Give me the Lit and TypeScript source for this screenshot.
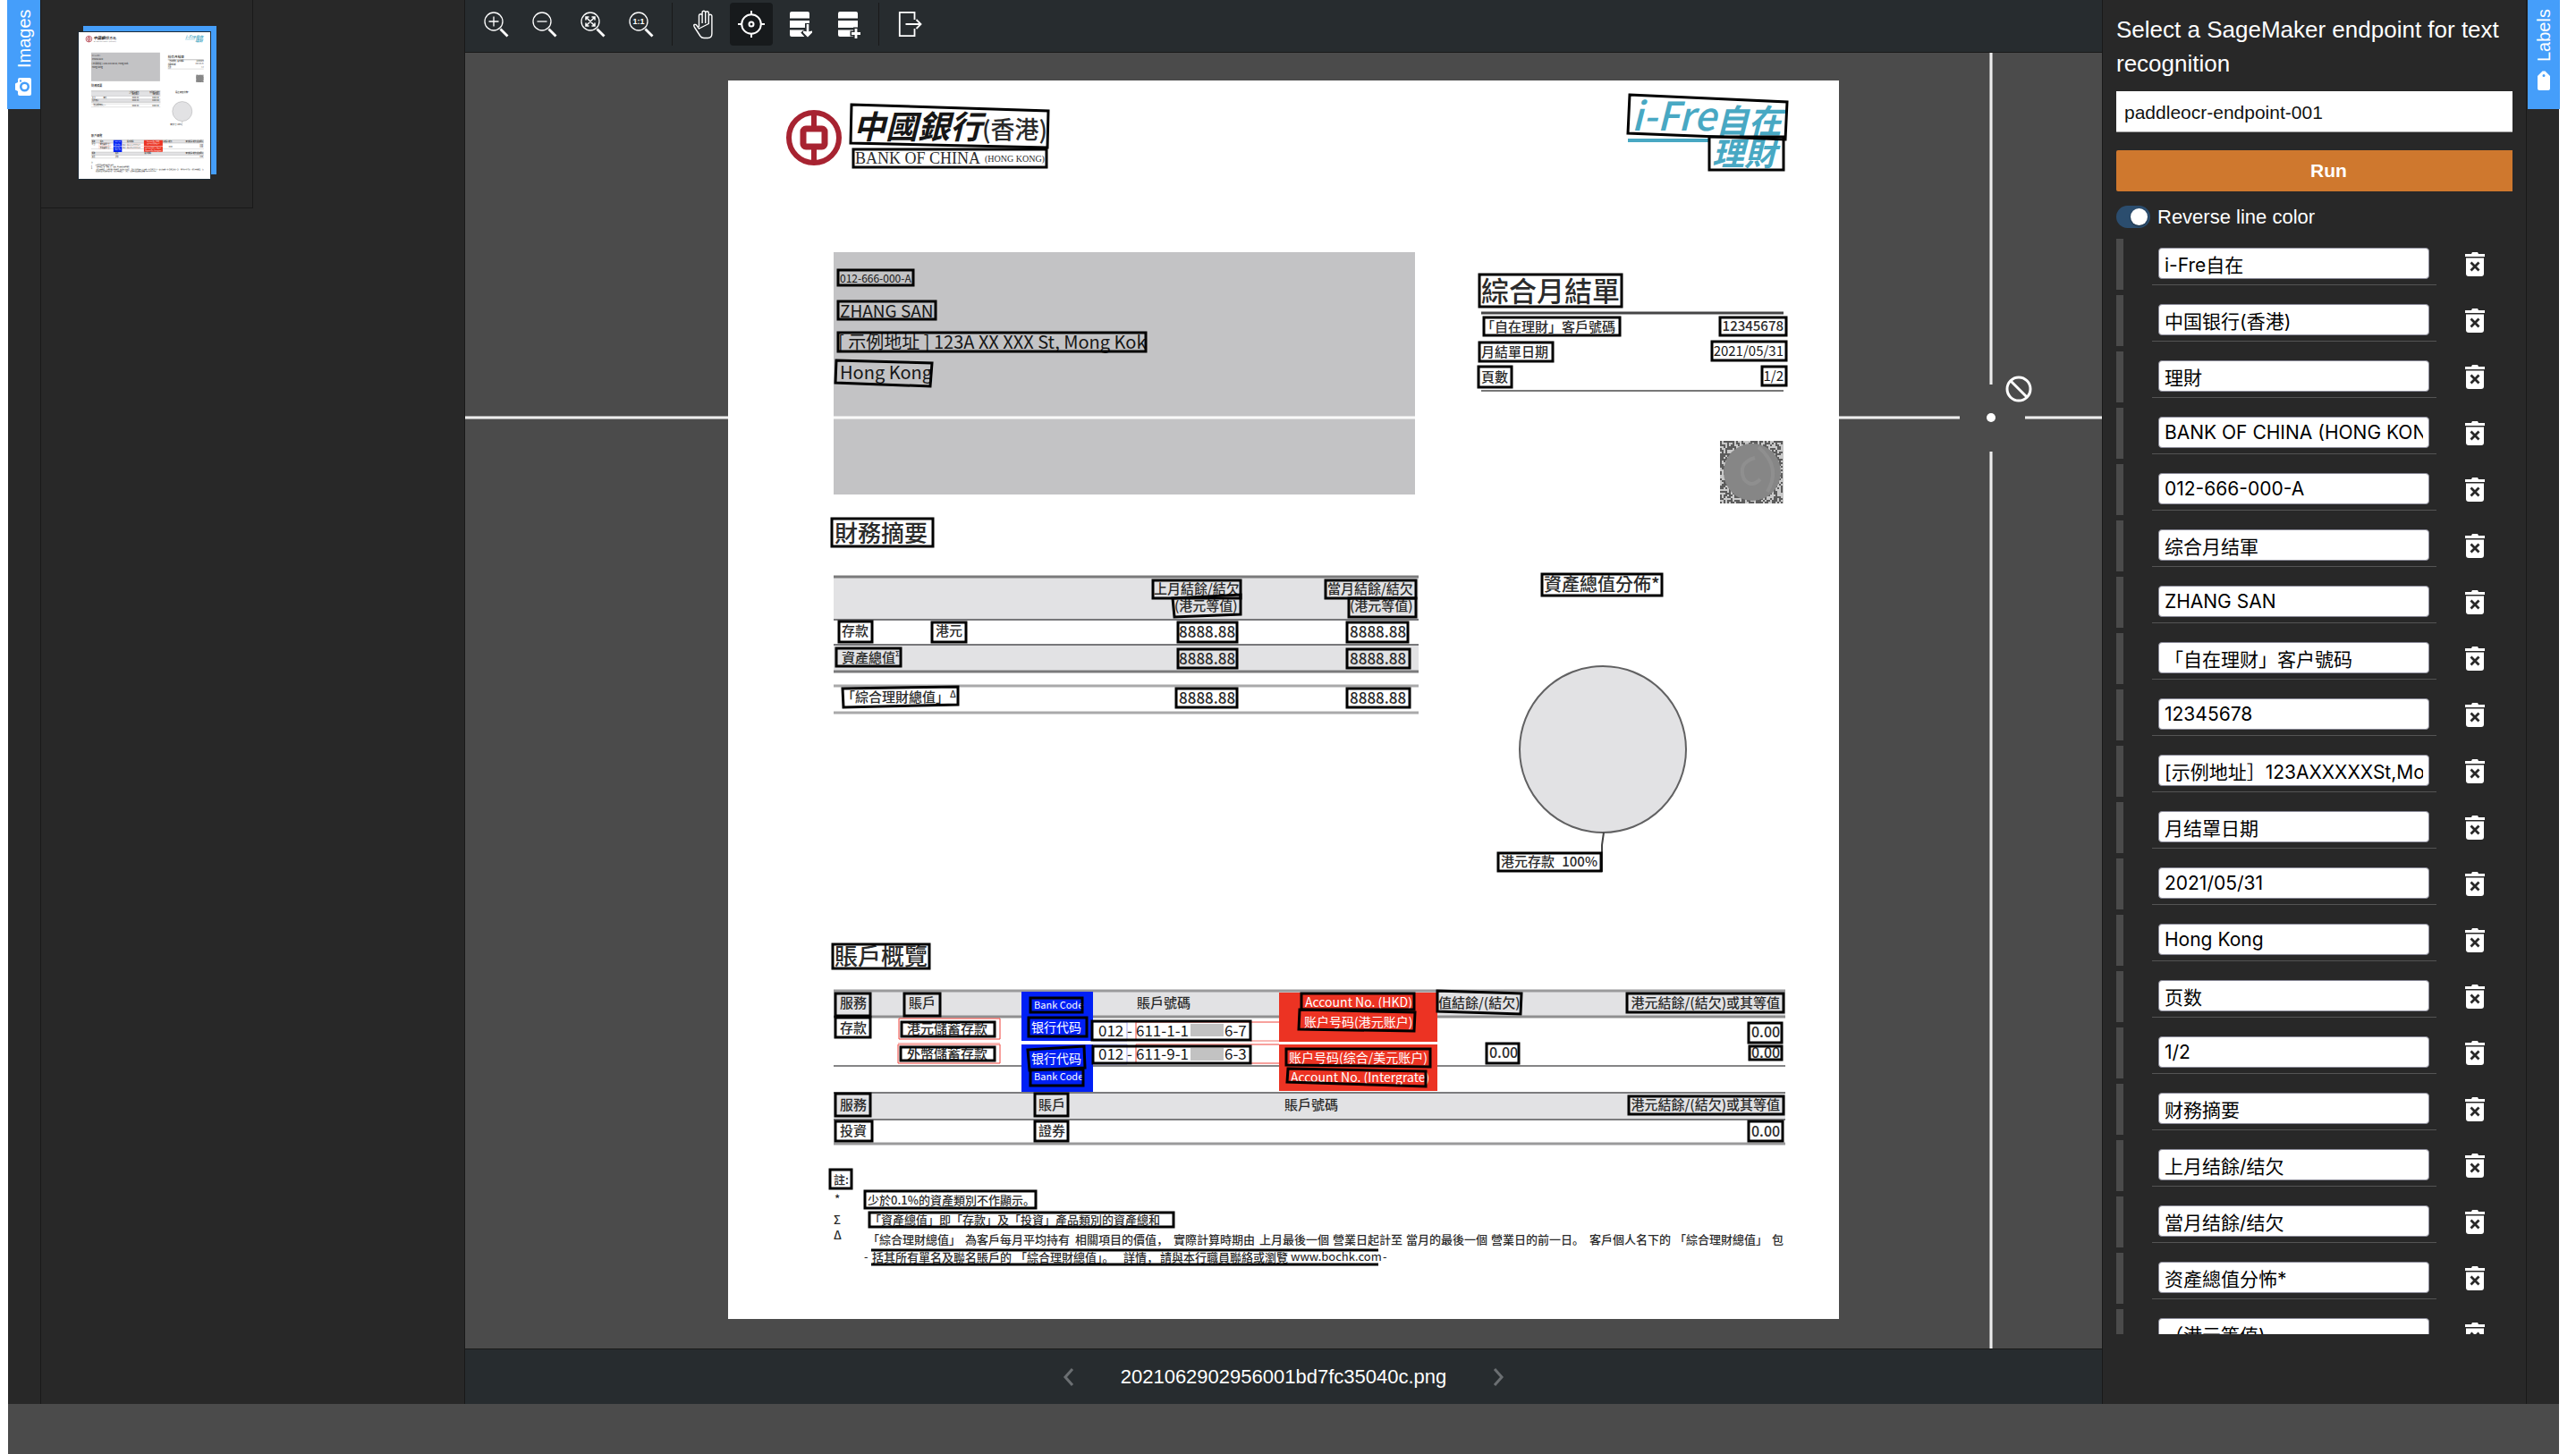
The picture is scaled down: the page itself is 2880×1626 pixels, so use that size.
import { LitElement, html, svg, css } from "lit";
import { customElement, property, state } from "lit/decorators.js";

type Pt = [number, number];
type Rule = { y: number; w: number; c: string };
type Note = { x: number; y: number; s: number; t: string; k?: string };

/* Sheet geometry: one unit is one canvas pixel at the default zoom. */
const SHEET = { x: 814, y: 90, w: 1242, h: 1385 };

const box = (x1: number, y1: number, x2: number, y2: number): Pt[] => [
  [x1, y1],
  [x2, y1],
  [x2, y2],
  [x1, y2],
];

const REGIONS: Pt[][] = [
  [[952, 117], [1172, 124], [1171, 165], [951, 160]],
  box(954, 167, 1170, 187),
  box(937, 302, 1021, 319),
  box(937, 337, 1046, 357),
  box(937, 372, 1281, 393),
  [[935, 403], [1042, 406], [1040, 432], [934, 428]],
  [[1822, 106], [1998, 114], [1996, 156], [1820, 149]],
  box(1911, 153, 1994, 190),
  box(1654, 307, 1813, 343),
  box(1659, 355, 1811, 375),
  box(1923, 355, 1997, 375),
  box(1654, 383, 1736, 404),
  box(1914, 382, 1997, 403),
  box(1653, 410, 1690, 433),
  box(1970, 410, 1997, 431),
  box(930, 580, 1043, 611),
  box(1289, 649, 1387, 669),
  [[1311, 669], [1387, 665], [1387, 687], [1313, 690]],
  box(1482, 649, 1583, 669),
  box(1508, 669, 1583, 690),
  box(938, 695, 975, 718),
  box(1042, 696, 1080, 718),
  box(1317, 696, 1383, 718),
  box(1506, 696, 1574, 718),
  box(935, 725, 1007, 745),
  box(1317, 726, 1383, 747),
  box(1506, 726, 1576, 747),
  [[942, 770], [1071, 768], [1071, 788], [943, 791]],
  box(1315, 770, 1383, 791),
  box(1506, 770, 1576, 791),
  box(1724, 642, 1858, 666),
  box(1675, 954, 1790, 974),
  box(931, 1056, 1039, 1083),
  box(934, 1111, 973, 1136),
  box(1011, 1111, 1051, 1136),
  box(934, 1138, 973, 1160),
  box(1008, 1143, 1112, 1159),
  box(1007, 1171, 1112, 1186),
  box(1152, 1116, 1210, 1132),
  box(1150, 1138, 1215, 1159),
  [[1149, 1174], [1212, 1170], [1213, 1194], [1151, 1197]],
  box(1152, 1196, 1211, 1214),
  box(1221, 1142, 1398, 1163),
  box(1222, 1170, 1398, 1189),
  box(1455, 1111, 1581, 1129),
  [[1453, 1129], [1582, 1132], [1581, 1153], [1452, 1151]],
  [[1438, 1173], [1599, 1173], [1599, 1193], [1438, 1191]],
  [[1440, 1195], [1594, 1198], [1594, 1215], [1439, 1210]],
  [[1607, 1108], [1701, 1111], [1700, 1134], [1607, 1131]],
  box(1819, 1111, 1994, 1132),
  box(1955, 1144, 1992, 1166),
  box(1956, 1170, 1992, 1185),
  box(1662, 1167, 1698, 1189),
  box(1821, 1226, 1994, 1246),
  box(1955, 1254, 1993, 1276),
  box(934, 1223, 973, 1248),
  box(1157, 1223, 1194, 1248),
  box(934, 1254, 975, 1276),
  box(1157, 1254, 1194, 1276),
  box(928, 1308, 952, 1329),
  box(967, 1332, 1158, 1351),
  box(972, 1356, 1312, 1372),
];

const SUMMARY_RULES: Rule[] = [
  { y: 645, w: 3, c: "#7a7a7b" },
  { y: 693, w: 2, c: "#77777a" },
  { y: 721, w: 2, c: "#77777a" },
  { y: 751, w: 3, c: "#7a7a7b" },
  { y: 767, w: 3, c: "#a9a9aa" },
  { y: 797, w: 3, c: "#a9a9aa" },
];

const ACCOUNT_RULES: Rule[] = [
  { y: 1108, w: 3, c: "#9a9a9b" },
  { y: 1137, w: 3, c: "#8f8f90" },
  { y: 1192, w: 2, c: "#858586" },
  { y: 1222, w: 2, c: "#7c7c7e" },
  { y: 1252, w: 2, c: "#7c7c7e" },
  { y: 1279, w: 3, c: "#9a9a9b" },
];

const TEXTS: Note[] = [
  { x: 954, y: 155, s: 36, t: "中國銀行", k: "brush" },
  { x: 1098, y: 155, s: 27, t: "(香港)" },
  { x: 956, y: 183, s: 18, t: "BANK OF CHINA", k: "serif" },
  { x: 1101, y: 181, s: 10, t: "(HONG KONG)", k: "serif" },
  { x: 939, y: 316, s: 12, t: "012-666-000-A", k: "book" },
  { x: 939, y: 355, s: 19, t: "ZHANG SAN", k: "book" },
  { x: 937, y: 390, s: 20, t: "[ 示例地址 ] 123A XX XXX St, Mong Kok", k: "book" },
  { x: 939, y: 424, s: 20, t: "Hong Kong", k: "book" },
  { x: 1824, y: 146, s: 44, t: "i-Fre", k: "brand" },
  { x: 1918, y: 149, s: 37, t: "自在", k: "brand strong" },
  { x: 1914, y: 185, s: 36, t: "理財", k: "brand strong" },
  { x: 1656, y: 337, s: 31, t: "綜合月結單" },
  { x: 1656, y: 371, s: 15, t: "「自在理財」客戶號碼" },
  { x: 1994, y: 370, s: 15, t: "12345678", k: "end" },
  { x: 1656, y: 399, s: 15, t: "月結單日期" },
  { x: 1994, y: 398, s: 15, t: "2021/05/31", k: "end book" },
  { x: 1656, y: 427, s: 15, t: "頁數" },
  { x: 1994, y: 426, s: 15, t: "1/2", k: "end book" },
  { x: 933, y: 606, s: 26, t: "財務摘要" },
  { x: 1290, y: 664, s: 15, t: "上月結餘/結欠" },
  { x: 1313, y: 683, s: 15, t: "(港元等值)" },
  { x: 1484, y: 664, s: 15, t: "當月結餘/結欠" },
  { x: 1509, y: 683, s: 15, t: "(港元等值)" },
  { x: 941, y: 711, s: 15, t: "存款" },
  { x: 1046, y: 711, s: 15, t: "港元" },
  { x: 1318, y: 713, s: 17, t: "8888.88" },
  { x: 1509, y: 713, s: 17, t: "8888.88" },
  { x: 941, y: 741, s: 15, t: "資產總值" },
  { x: 1001, y: 734, s: 8, t: "Σ" },
  { x: 1318, y: 743, s: 17, t: "8888.88" },
  { x: 1509, y: 743, s: 17, t: "8888.88" },
  { x: 941, y: 785, s: 15, t: "「綜合理財總值」" },
  { x: 1062, y: 780, s: 10, t: "Δ" },
  { x: 1318, y: 787, s: 17, t: "8888.88" },
  { x: 1509, y: 787, s: 17, t: "8888.88" },
  { x: 1726, y: 661, s: 20, t: "資產總值分佈*" },
  { x: 1678, y: 969, s: 15, t: "港元存款" },
  { x: 1786, y: 969, s: 15, t: "100%", k: "end" },
  { x: 933, y: 1079, s: 26, t: "賬戶概覽" },
  { x: 939, y: 1127, s: 15, t: "服務" },
  { x: 1016, y: 1127, s: 15, t: "賬戶" },
  { x: 1271, y: 1127, s: 15, t: "賬戶號碼" },
  { x: 939, y: 1155, s: 15, t: "存款" },
  { x: 1014, y: 1156, s: 15, t: "港元儲蓄存款" },
  { x: 1014, y: 1184, s: 15, t: "外幣儲蓄存款" },
  { x: 1156, y: 1128, s: 11, t: "Bank Code", k: "light" },
  { x: 1153, y: 1154, s: 14, t: "银行代码", k: "light" },
  { x: 1153, y: 1189, s: 14, t: "银行代码", k: "light" },
  { x: 1156, y: 1208, s: 11, t: "Bank Code", k: "light" },
  { x: 1228, y: 1159, s: 17, t: "012", k: "book" },
  { x: 1260, y: 1159, s: 17, t: "-", k: "book" },
  { x: 1270, y: 1159, s: 17, t: "611-1-1", k: "book" },
  { x: 1369, y: 1159, s: 17, t: "6-7", k: "book" },
  { x: 1228, y: 1185, s: 17, t: "012", k: "book" },
  { x: 1260, y: 1185, s: 17, t: "-", k: "book" },
  { x: 1270, y: 1185, s: 17, t: "611-9-1", k: "book" },
  { x: 1369, y: 1185, s: 17, t: "6-3", k: "book" },
  { x: 1459, y: 1126, s: 14, t: "Account No. (HKD)", k: "light" },
  { x: 1458, y: 1148, s: 14, t: "账户号码(港元账户)", k: "light" },
  { x: 1441, y: 1188, s: 14, t: "账户号码(综合/美元账户)", k: "light" },
  { x: 1443, y: 1210, s: 14, t: "Account No. (Intergrate)", k: "light" },
  { x: 1608, y: 1127, s: 15, t: "值結餘/(結欠)" },
  { x: 1990, y: 1127, s: 15, t: "港元結餘/(結欠)或其等值", k: "end" },
  { x: 1958, y: 1160, s: 16, t: "0.00" },
  { x: 1958, y: 1183, s: 16, t: "0.00" },
  { x: 1665, y: 1183, s: 16, t: "0.00" },
  { x: 939, y: 1241, s: 15, t: "服務" },
  { x: 1161, y: 1241, s: 15, t: "賬戶" },
  { x: 1436, y: 1241, s: 15, t: "賬戶號碼" },
  { x: 1990, y: 1241, s: 15, t: "港元結餘/(結欠)或其等值", k: "end" },
  { x: 939, y: 1270, s: 15, t: "投資" },
  { x: 1161, y: 1270, s: 15, t: "證券" },
  { x: 1958, y: 1271, s: 16, t: "0.00" },
  { x: 932, y: 1324, s: 13, t: "註:" },
  { x: 933, y: 1346, s: 13, t: "*" },
  { x: 932, y: 1369, s: 13, t: "Σ" },
  { x: 932, y: 1386, s: 13, t: "Δ" },
  { x: 970, y: 1347, s: 13, t: "少於0.1%的資產類別不作顯示。", k: "note" },
  { x: 972, y: 1369, s: 13, t: "「資產總值」即「存款」及「投資」產品類別的資產總和", k: "note" },
  { x: 970, y: 1391, s: 13, t: "「綜合理財總值」", k: "note" },
  { x: 1079, y: 1391, s: 13, t: "為客戶每月平均持有", k: "note" },
  { x: 1202, y: 1391, s: 13, t: "相關項目的價值，", k: "note" },
  { x: 1312, y: 1391, s: 13, t: "實際計算時期由", k: "note" },
  { x: 1408, y: 1391, s: 13, t: "上月最後一個", k: "note" },
  { x: 1490, y: 1391, s: 13, t: "營業日起計至", k: "note" },
  { x: 1572, y: 1391, s: 13, t: "當月的最後一個", k: "note" },
  { x: 1667, y: 1391, s: 13, t: "營業日的前一日。", k: "note" },
  { x: 1777, y: 1391, s: 13, t: "客戶個人名下的", k: "note" },
  { x: 1872, y: 1391, s: 13, t: "「綜合理財總值」", k: "note" },
  { x: 1981, y: 1391, s: 13, t: "包", k: "note" },
  { x: 966, y: 1410, s: 13, t: "-", k: "book" },
  { x: 975, y: 1411, s: 13, t: "括其所有單名及聯名賬戶的", k: "note" },
  { x: 1135, y: 1411, s: 13, t: "「綜合理財總值」。", k: "note" },
  { x: 1256, y: 1411, s: 13, t: "詳情，", k: "note" },
  { x: 1297, y: 1411, s: 13, t: "請與本行職員聯絡或瀏覽", k: "note" },
  { x: 1443, y: 1410, s: 13, t: "www.bochk.com", k: "book" },
  { x: 1546, y: 1410, s: 13, t: "-", k: "book" },
];

/* Deterministic speckle for the obscured QR code. */
const QR_PATH = (() => {
  let seed = 7;
  let d = "";
  for (let r = 0; r < 35; r++) {
    for (let c = 0; c < 35; c++) {
      seed = (seed * 1103515245 + 12345) % 2147483648;
      if (seed / 2147483648 > 0.45) d += `M${1923 + c * 2} ${493 + r * 2}h2v2h-2z`;
    }
  }
  return d;
})();

@customElement("statement-page")
class StatementPage extends LitElement {
  @property({ type: Boolean }) regions = false;

  static styles = css`
    :host {
      display: block;
    }
    .sheet {
      display: block;
      width: 100%;
      height: 100%;
      background: #fff;
    }
    text {
      font-family: "Noto Sans CJK TC", "Noto Sans CJK SC", sans-serif;
      font-weight: 500;
      fill: #2b2b2b;
      white-space: pre;
    }
    .end {
      text-anchor: end;
    }
    .book {
      font-weight: 400;
      fill: #161616;
    }
    .note {
      font-family: "Noto Sans CJK SC", sans-serif;
    }
    .brush {
      font-weight: 700;
      font-style: italic;
      fill: #161616;
    }
    .serif {
      font-family: "Liberation Serif", serif;
    }
    .brand {
      fill: #48a8c3;
      font-style: italic;
    }
    .strong {
      font-weight: 700;
    }
    .light {
      font-weight: 400;
      fill: #fff;
    }
    .region {
      fill: none;
      stroke: #000;
      stroke-width: 3;
    }
  `;

  render() {
    const rules = (list: Rule[], x2: number) =>
      list.map(
        (r) => svg`<line x1="932" x2=${x2} y1=${r.y} y2=${r.y} stroke=${r.c} stroke-width=${r.w}></line>`
      );
    return html`
      <svg
        class="sheet"
        viewBox="${SHEET.x} ${SHEET.y} ${SHEET.w} ${SHEET.h}"
        role="img"
        aria-label="Bank statement"
      >
        <g fill="none" stroke="#a72331">
          <circle cx="910" cy="154" r="28" stroke-width="6"></circle>
          <path d="M910 126v18M910 163v19" stroke-width="6"></path>
          <rect x="898" y="144" width="24" height="20" rx="3" stroke-width="7"></rect>
        </g>
        <line x1="1820" x2="1912" y1="157" y2="157" stroke="#48a8c3" stroke-width="4"></line>
        <rect x="932" y="282" width="650" height="271" fill="#c3c3c5"></rect>
        <line x1="1656" x2="1994" y1="350" y2="350" stroke="#454546" stroke-width="3"></line>
        <line x1="1656" x2="1994" y1="437" y2="437" stroke="#777" stroke-width="2"></line>
        <rect x="1923" y="493" width="71" height="70" fill="#c9c9c9"></rect>
        <path d=${QR_PATH} fill="#5c5c5c"></path>
        <circle cx="1959" cy="528" r="32" fill="#868686"></circle>
        <path
          d="M1966 500q26 22 10 50M1962 512q-20 6-12 24q8 10 18 0"
          fill="none"
          stroke="#8f8f8f"
          stroke-width="4"
        ></path>

        <rect x="932" y="645" width="654" height="48" fill="#e2e2e4"></rect>
        <rect x="932" y="721" width="654" height="30" fill="#e2e2e4"></rect>
        ${rules(SUMMARY_RULES, 1586)}

        <circle cx="1792" cy="838" r="93" fill="#e2e2e4" stroke="#616162" stroke-width="2"></circle>
        <path d="M1793 931l-2 14v30" fill="none" stroke="#444" stroke-width="2"></path>

        <rect x="932" y="1108" width="1064" height="29" fill="#e2e2e4"></rect>
        <rect x="932" y="1222" width="1064" height="30" fill="#e2e2e4"></rect>
        ${rules(ACCOUNT_RULES, 1996)}
        <g fill="none" stroke="#f0433a">
          <path d="M1005 1139h113v23h-113zM1004 1168h114v21h-114z"></path>
          <path d="M1270 1143h160M1270 1143v20M1270 1168h160M1270 1168v21M1270 1189h160"></path>
        </g>
        <path d="M1004 1167h114M1398 1164h32" stroke="#f9b9b5" stroke-width="2"></path>
        <path d="M1222 1143h38v21h-38M1222 1168h38v22h-38" fill="none" stroke="#a9acf5"></path>
        <path d="M1142 1109h80v55h-80zM1142 1168h80v53h-80z" fill="#0020f5"></path>
        <path d="M1430 1110h177v55h-177zM1430 1168h177v52h-177z" fill="#ec3323"></path>
        <g fill="#c2c2c2">
          <rect x="1331" y="1145" width="37" height="14"></rect>
          <rect x="1331" y="1172" width="37" height="14"></rect>
        </g>

        ${TEXTS.map(
          (n) => svg`<text class=${n.k ?? ""} x=${n.x} y=${n.y} font-size=${n.s}>${n.t}</text>`
        )}
        ${this.regions
          ? svg`<g class="region">
              ${REGIONS.map((p) => svg`<polygon points=${p.map((q) => q.join(",")).join(" ")}></polygon>`)}
              <path d="M974 1398h567M974 1414h567"></path>
            </g>`
          : ""}
      </svg>
    `;
  }
}

const lens = (inner: unknown) => svg`
  <circle cx="11" cy="11" r="10" fill="none" stroke="currentColor" stroke-width="1.3"></circle>
  <path d="M18.5 19.5l8 8" stroke="currentColor" stroke-width="2.8"></path>
  ${inner}`;

const stack = svg`
  <path
    d="M2 0h18a2 2 0 0 1 2 2v5.400H0V2a2 2 0 0 1 2-2zM0 10h22v8H0zM0 20.400h22V26a2 2 0 0 1-2 2H2a2 2 0 0 1-2-2z"
    fill="currentColor"
  ></path>`;

const ICONS: Record<string, unknown> = {
  zoomIn: lens(svg`<path d="M11 5.500v11M5.500 11h11" stroke="currentColor" stroke-width="1.300"></path>`),
  zoomOut: lens(svg`<path d="M5.500 11h11" stroke="currentColor" stroke-width="1.300"></path>`),
  zoomFit: lens(svg`<path
    d="M6.500 6.500l9 9M15.500 6.500l-9 9M6 9.500V6h3.500M12.500 6H16v3.500M16 12.500V16h-3.500M9.500 16H6v-3.500"
    fill="none" stroke="currentColor" stroke-width="1.500"></path>`),
  zoomActual: lens(
    svg`<text x="11" y="14" text-anchor="middle" font-size="9" font-weight="700" fill="currentColor">1:1</text>`
  ),
  pan: svg`<path
    d="M7.500 17V4.500a1.800 1.800 0 0 1 3.600 0V13M11.100 13V1a1.800 1.800 0 0 1 3.600 0V13M14.700 13V1.500a1.800 1.800 0 0 1 3.600 0V13.500M18.300 13.500V5a1.800 1.800 0 0 1 3.600 0V24.500q0 5-4.500 5H13q-2.500 0-4-2L2.500 17.500q-1.500-2.500 0-3q1.500-.5 2.500 1L7.500 19z"
    transform="translate(2 0)"
    fill="none" stroke="currentColor" stroke-width="1.400" stroke-linejoin="round"></path>`,
  target: svg`<g fill="none" stroke="currentColor" stroke-width="2">
    <circle cx="14" cy="14" r="10.800"></circle>
    <circle cx="14" cy="14" r="2.500"></circle>
    <path d="M14-1v5M14 24v5M-1 14h5M24 14h5"></path>
  </g>`,
  load: svg`<g transform="translate(3 0)">${stack}
    <path d="M20 13v13M14.500 21.500l5.500 6 5.500-6" fill="none" stroke="var(--bar)" stroke-width="6"></path>
    <path d="M20 14v9" stroke="currentColor" stroke-width="2.600"></path>
    <path d="M15 21.500l5 1 5-1v2l-5 5-5-5z" fill="currentColor"></path></g>`,
  add: svg`<g transform="translate(3 0)">${stack}
    <path d="M20 17.500v13M13.500 24.500h13" stroke="var(--bar)" stroke-width="6"></path>
    <path d="M20 19v11M15 24.500h10" stroke="currentColor" stroke-width="2.800"></path></g>`,
  exit: svg`<path
    d="M19.500 9V.8H2.800V27.200H19.500V19M9.500 14H26M21.500 9L26.500 14L21.500 19"
    fill="none" stroke="currentColor" stroke-width="1.800"></path>`,
};

const TOOLS: { id: string; label: string }[][] = [
  [
    { id: "zoomIn", label: "Zoom in" },
    { id: "zoomOut", label: "Zoom out" },
    { id: "zoomFit", label: "Fit image" },
    { id: "zoomActual", label: "Actual size" },
  ],
  [
    { id: "pan", label: "Drag image" },
    { id: "target", label: "Toggle crosshair" },
    { id: "load", label: "Import labels" },
    { id: "add", label: "Add labels" },
  ],
  [{ id: "exit", label: "Close project" }],
];

const LABELS = [
  "i-Fre自在",
  "中国银行(香港)",
  "理財",
  "BANK OF CHINA (HONG KONG)",
  "012-666-000-A",
  "综合月结軍",
  "ZHANG SAN",
  "「自在理财」客户號码",
  "12345678",
  "[示例地址］123AXXXXXSt,MongKok",
  "月结罩日期",
  "2021/05/31",
  "Hong Kong",
  "页数",
  "1/2",
  "财務摘要",
  "上月结餘/结欠",
  "當月结餘/结欠",
  "资產總值分怖*",
  "（港元等值)",
];

@customElement("app-root")
class AppRoot extends LitElement {
  @state() private active = "target";

  static styles = css`
    :host {
      --bar: #272c2f;
      --panel: #282828;
      --edge: #191919;
      --line: #4b4b4b;
      --accent: #459efa;
      display: grid;
      grid-template-columns: 36px 475px minmax(0, 1fr) 475px 36px;
      grid-template-rows: minmax(0, 1fr) 56px;
      height: 100vh;
      box-sizing: border-box;
      padding: 0 19px 0 9px;
      background: #fff;
      color: #fff;
      font-family: "Liberation Sans", "Noto Sans CJK SC", sans-serif;
      font-size: 22px;
    }
    * {
      box-sizing: border-box;
    }
    button,
    input,
    select {
      margin: 0;
      font: inherit;
    }
    button {
      padding: 0;
      border: 0;
      background: none;
      color: inherit;
      cursor: pointer;
    }
    svg {
      display: block;
      overflow: visible;
    }
    .rail {
      background: var(--panel);
    }
    .tab {
      display: flex;
      align-items: center;
      justify-content: flex-end;
      gap: 10px;
      width: 37px;
      height: 122px;
      padding: 10px 0;
      background: var(--accent);
      font-size: 20px;
      line-height: 24px;
      writing-mode: vertical-rl;
      transform: rotate(180deg);
    }
    .tab svg {
      transform: rotate(180deg);
    }
    .rail.start .tab {
      margin-left: -1px;
    }
    .rail.end .tab {
      margin-left: 1px;
      width: 36px;
    }
    .gallery {
      background: var(--panel);
      border: solid var(--edge);
      border-width: 0 1px;
    }
    .cell {
      display: flex;
      align-items: flex-start;
      justify-content: center;
      width: 237px;
      height: 233px;
      padding-top: 35px;
      padding-right: 6px;
      border: solid var(--edge);
      border-width: 0 1px 1px 0;
    }
    .thumb {
      width: 149px;
      height: 166px;
      border: 1px solid #1d2a36;
      box-shadow: 6px -6px 0 var(--accent);
    }
    .thumb statement-page {
      height: 100%;
    }
    .editor {
      display: flex;
      flex-direction: column;
      min-width: 0;
    }
    .toolbar {
      display: flex;
      gap: 6px;
      padding: 3px 11px 7px;
      background: var(--bar);
      border-bottom: 1px solid var(--edge);
    }
    .group {
      display: flex;
      gap: 6px;
    }
    .group + .group::before {
      content: "";
      width: 1px;
      margin: 0 4px;
      background: var(--edge);
    }
    .tool {
      display: grid;
      place-items: center;
      width: 48px;
      height: 48px;
      border-radius: 4px;
    }
    .tool.on {
      background: #171a1c;
    }
    .stage {
      position: relative;
      flex: 1;
      display: flex;
      justify-content: center;
      min-height: 0;
      padding: 31px 0 33px;
      background: #4b4b4b;
      cursor: crosshair;
    }
    .stage statement-page {
      height: 100%;
      aspect-ratio: 1242 / 1385;
    }
    .cross {
      position: absolute;
      inset: 0;
      width: 100%;
      height: 100%;
      overflow: hidden;
      pointer-events: none;
    }
    .status {
      display: flex;
      align-items: center;
      justify-content: center;
      gap: 52px;
      height: 62px;
      background: var(--bar);
      border-top: 1px solid var(--edge);
    }
    .inspector {
      display: flex;
      flex-direction: column;
      padding: 14px 15px 78px;
      background: var(--panel);
      border: solid var(--edge);
      border-width: 0 1px;
    }
    .heading {
      margin-bottom: 12px;
      font-size: 26px;
      line-height: 38px;
    }
    .endpoint {
      appearance: none;
      height: 46px;
      margin-bottom: 20px;
      padding: 2px 9px 0;
      border: 0;
      border-bottom: 1px solid #9a9a9a;
      border-radius: 0;
      background: #fff;
      color: #111;
      font-size: 21px;
    }
    .run {
      flex: none;
      height: 46px;
      margin-bottom: 16px;
      padding-left: 32px;
      border-radius: 2px 0 0 2px;
      background: #cf782e;
      font-size: 21px;
      font-weight: 700;
    }
    .switch {
      display: flex;
      align-items: center;
      gap: 8px;
      height: 25px;
      margin-bottom: 12px;
      line-height: 25px;
    }
    .toggle {
      appearance: none;
      display: flex;
      width: 38px;
      height: 25px;
      padding: 3px;
      border-radius: 13px;
      background: #666;
    }
    .toggle::before {
      content: "";
      width: 19px;
      height: 19px;
      border-radius: 50%;
      background: #fff;
      box-shadow: 0 1px 2px #0006;
    }
    .toggle:checked {
      justify-content: flex-end;
      background: #2b4d6e;
    }
    .labels {
      flex: 1;
      min-height: 0;
      margin: 0;
      padding: 0;
      overflow: hidden;
      list-style: none;
    }
    .row {
      display: grid;
      grid-template-columns: 8px minmax(0, 1fr) 22px;
      column-gap: 32px;
      height: 57px;
      margin-bottom: 6px;
      padding-right: 31px;
    }
    .grip {
      background: var(--line);
    }
    .field {
      height: 52px;
      padding: 10px 8px 6px 7px;
      border-bottom: 1px solid #545454;
    }
    .value {
      display: block;
      width: 100%;
      height: 35px;
      padding: 0 6px;
      border: 1px solid #8b8b99;
      border-radius: 4px;
      background: #fff;
      color: #000;
      font-family: Inter, "Noto Sans CJK SC", sans-serif;
      font-size: 21px;
    }
    .footer {
      grid-column: 1 / -1;
      background: var(--line);
    }
  `;

  render() {
    const cross = svg`
      <line x1="0" y1="408" x2="1671" y2="408"></line>
      <line x1="1744" y1="408" x2="100%" y2="408"></line>
      <line x1="1706" y1="0" x2="1706" y2="371"></line>
      <line x1="1706" y1="446" x2="1706" y2="100%"></line>`;
    return html`
      <nav class="rail start">
        <button class="tab">
          <svg width="18" height="22" viewBox="0 0 18 22" fill="currentColor">
            <path
              fill-rule="evenodd"
              d="M5 1h11a2 2 0 0 1 2 2v16a2 2 0 0 1-2 2H5a2 2 0 0 1-2-2v-3l-2-1a1 1 0 0 1-1-1V8a1 1 0 0 1 1-1l2-1V3a2 2 0 0 1 2-2zM10.500 5.500a5.500 5.500 0 1 0 0 11a5.500 5.500 0 1 0 0-11zM10.500 8a3 3 0 1 1 0 6a3 3 0 1 1 0-6zM5 3.500h2v2H5z"
            ></path>
          </svg>
          Images
        </button>
      </nav>

      <aside class="gallery">
        <div class="cell">
          <div class="thumb"><statement-page></statement-page></div>
        </div>
      </aside>

      <main class="editor">
        <div class="toolbar" role="toolbar">
          ${TOOLS.map(
            (group) => html`<div class="group">
              ${group.map(
                (t) => html`<button
                  class="tool ${t.id === this.active ? "on" : ""}"
                  aria-label=${t.label}
                  @click=${() => (this.active = t.id)}
                >
                  <svg width="28" height="28" viewBox="0 0 28 28">${ICONS[t.id]}</svg>
                </button>`
              )}
            </div>`
          )}
        </div>
        <div class="stage">
          <statement-page regions></statement-page>
          <svg class="cross" aria-hidden="true">
            <g stroke="#fff" stroke-opacity="0.5" stroke-width="4">${cross}</g>
            <g stroke="#fff" stroke-opacity="0.8" stroke-width="2">${cross}</g>
            <circle cx="1706" cy="408" r="5" fill="#fff"></circle>
            <g fill="none" stroke="#fff" stroke-width="3">
              <circle cx="1737" cy="376" r="13"></circle>
              <path d="M1728 367l18 18"></path>
            </g>
          </svg>
        </div>
        <div class="status">
          <button aria-label="Previous image">
            <svg width="13" height="22" viewBox="0 0 13 22">
              <path d="M11 2L3 11l8 9" fill="none" stroke="#6b6f72" stroke-width="3"></path>
            </svg>
          </button>
          <span>2021062902956001bd7fc35040c.png</span>
          <button aria-label="Next image">
            <svg width="13" height="22" viewBox="0 0 13 22">
              <path d="M2 2l8 9l-8 9" fill="none" stroke="#6b6f72" stroke-width="3"></path>
            </svg>
          </button>
        </div>
      </main>

      <aside class="inspector">
        <label class="heading" for="endpoint">Select a SageMaker endpoint for text recognition</label>
        <select class="endpoint" id="endpoint">
          <option>paddleocr-endpoint-001</option>
        </select>
        <button class="run">Run</button>
        <label class="switch">
          <input class="toggle" type="checkbox" checked />
          Reverse line color
        </label>
        <ul class="labels">
          ${LABELS.map(
            (text, i) => html`<li class="row">
              <span class="grip"></span>
              <div class="field">
                <input class="value" type="text" aria-label="Label ${i + 1}" .value=${text} />
              </div>
              <button aria-label="Delete label ${i + 1}">
                <svg width="22" height="27" viewBox="0 0 22 27">
                  <path d="M0 2h7l1-2h6l1 2h7v3H0z" fill="currentColor"></path>
                  <path d="M1 6.500h20V24a3 3 0 0 1-3 3H4a3 3 0 0 1-3-3z" fill="currentColor"></path>
                  <path d="M6.500 11.500l9 9M15.500 11.500l-9 9" stroke="#282828" stroke-width="2.800"></path>
                </svg>
              </button>
            </li>`
          )}
        </ul>
      </aside>

      <nav class="rail end">
        <button class="tab">
          <svg width="14" height="22" viewBox="0 0 14 22" fill="currentColor">
            <path
              fill-rule="evenodd"
              d="M5.500.500h3L14 6v14a2 2 0 0 1-2 2H2a2 2 0 0 1-2-2V6zM7 4a1.500 1.500 0 1 0 0 3a1.500 1.500 0 1 0 0-3z"
            ></path>
          </svg>
          Labels
        </button>
      </nav>

      <footer class="footer"></footer>
    `;
  }
}
